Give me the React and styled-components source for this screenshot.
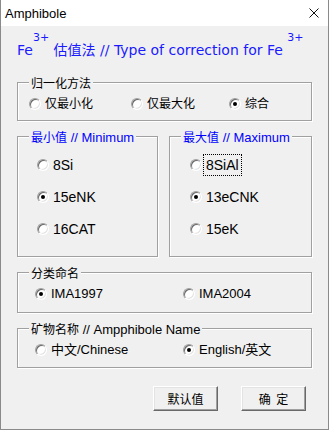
import React from 'react';
import styled, { createGlobalStyle } from 'styled-components';

const Global = createGlobalStyle`
  html, body { margin: 0; padding: 0; background: #ffffff; }
  body { font-family: "Liberation Sans", "Noto Sans CJK SC", sans-serif; }
`;

const Window = styled.div`
  width: 329px;
  height: 430px;
  box-sizing: border-box;
  border: 1px solid #8a8a8a;
  border-top: none;
  background: #f0f0f0;
  display: flex;
  flex-direction: column;
`;

const TitleBar = styled.div`
  flex: none;
  height: 26px;
  background: #ffffff;
  display: flex;
  align-items: center;
  justify-content: space-between;
  padding: 0 9px 0 4px;
  font: 13px/15px "Liberation Sans", sans-serif;
  color: #000;
`;

const Body = styled.div`
  flex: 1;
  display: flex;
  flex-direction: column;
  padding: 12px 16px 0 16px;
`;

const Heading = styled.div`
  height: 24px;
  margin-bottom: 20px;
  font: 14px/18px "DejaVu Sans", "Noto Sans CJK SC", sans-serif;
  color: #1a1aff;
  white-space: nowrap;
`;

const Han = styled.span`
  font-family: "Noto Sans CJK SC", sans-serif;
  font-size: ${p => p.$size || 14}px;
`;

const Sup = styled.span`
  font-size: 11px;
  line-height: 0;
  vertical-align: 14px;
`;

const Stack = styled.div`
  display: flex;
  flex-direction: column;
  gap: 15px;
`;

const Pair = styled.div`
  display: grid;
  grid-template-columns: 141px 143px;
  column-gap: 11px;
`;

const Group = styled.div`
  position: relative;
  box-sizing: border-box;
  height: ${p => p.$h}px;
  border: 1px solid #a0a0a0;
  box-shadow: inset 1px 1px 0 #ffffff, 1px 1px 0 #ffffff;
  padding: ${p => p.$pad};
`;

const Legend = styled.span`
  position: absolute;
  left: 11px;
  top: -8px;
  padding: 0 2px;
  background: #f0f0f0;
  font: 13px/16px "Liberation Sans", "Noto Sans CJK SC", sans-serif;
  color: ${p => (p.$blue ? '#0000ff' : '#000000')};
  white-space: nowrap;
`;

const Row = styled.div`
  display: grid;
  grid-template-columns: ${p => p.$cols};
  align-items: center;
`;

const Column = styled.div`
  display: flex;
  flex-direction: column;
  gap: 10px;
`;

const Option = styled.div`
  display: flex;
  align-items: center;
  gap: ${p => p.$gap}px;
  height: ${p => p.$h}px;
  font-size: ${p => p.$size}px;
  line-height: ${p => p.$h}px;
  color: #000;
  white-space: nowrap;
`;

const RadioMark = styled.span`
  flex: none;
  position: relative;
  width: 12px;
  height: 12px;
  box-sizing: border-box;
  border-radius: 50%;
  background: #ffffff;
  border: 1px solid;
  border-color: #a0a0a0 #ffffff #ffffff #a0a0a0;
  box-shadow: inset 1px 1px 0 #696969, inset -1px -1px 0 #e3e3e3;
  &::after {
    content: '';
    display: ${p => (p.$on ? 'block' : 'none')};
    position: absolute;
    left: 3px;
    top: 3px;
    width: 4px;
    height: 4px;
    border-radius: 50%;
    background: #000;
  }
`;

const FocusText = styled.span`
  box-sizing: border-box;
  height: 22px;
  line-height: 20px;
  padding: 0 2px;
  border: 1px dotted ${p => (p.$focus ? '#000' : 'transparent')};
`;

const Buttons = styled.div`
  display: flex;
  justify-content: flex-end;
  gap: 23px;
  margin-top: 18px;
  padding-right: 6px;
`;

const Button = styled.button`
  width: 65px;
  height: 25px;
  box-sizing: border-box;
  padding: 0;
  background: #f0f0f0;
  border: 1px solid;
  border-color: #ffffff #696969 #696969 #ffffff;
  box-shadow: inset -1px -1px 0 #a0a0a0, inset 1px 1px 0 #e3e3e3;
  font: 12px/16px "Noto Sans CJK SC", sans-serif;
  color: #000;
  word-spacing: 3px;
`;

function Radio({ on, children, size, h = 16, gap = 4 }) {
  return (
    <Option $size={size} $h={h} $gap={gap}>
      <RadioMark $on={on} />
      {children}
    </Option>
  );
}

function FocusRadio({ on, focus, children }) {
  return (
    <Option $size={14} $h={22} $gap={1}>
      <RadioMark $on={on} />
      <FocusText $focus={focus}>{children}</FocusText>
    </Option>
  );
}

export default function App() {
  return (
    <>
      <Global />
      <Window>
        <TitleBar>
          <span>Amphibole</span>
          <svg width="10" height="10" viewBox="0 0 10 10">
            <path d="M0.5 0.5 L9.5 9.5 M9.5 0.5 L0.5 9.5" stroke="#111" strokeWidth="1" />
          </svg>
        </TitleBar>
        <Body>
          <Heading>
            Fe<Sup>3+</Sup> <Han>估值法</Han> // Type of correction for Fe <Sup>3+</Sup>
          </Heading>
          <Stack>
            <Group $h={39} $pad="13px 0 0 11px">
              <Legend><Han $size={12}>归一化方法</Han></Legend>
              <Row $cols="102px 98px auto">
                <Radio size={12}>仅最小化</Radio>
                <Radio size={12}>仅最大化</Radio>
                <Radio size={12} on>综合</Radio>
              </Row>
            </Group>
            <Pair>
              <Group $h={121} $pad="17px 0 0 19px">
                <Legend $blue><Han $size={12}>最小值</Han> // Minimum</Legend>
                <Column>
                  <FocusRadio>8Si</FocusRadio>
                  <FocusRadio on>15eNK</FocusRadio>
                  <FocusRadio>16CAT</FocusRadio>
                </Column>
              </Group>
              <Group $h={121} $pad="17px 0 0 20px">
                <Legend $blue><Han $size={12}>最大值</Han> // Maximum</Legend>
                <Column>
                  <FocusRadio focus>8SiAl</FocusRadio>
                  <FocusRadio on>13eCNK</FocusRadio>
                  <FocusRadio>15eK</FocusRadio>
                </Column>
              </Group>
            </Pair>
            <Group $h={41} $pad="13px 0 0 17px">
              <Legend><Han $size={12}>分类命名</Han></Legend>
              <Row $cols="148px auto">
                <Radio size={13} on>IMA1997</Radio>
                <Radio size={13}>IMA2004</Radio>
              </Row>
            </Group>
            <Group $h={40} $pad="13px 0 0 17px">
              <Legend><Han $size={12}>矿物名称</Han> // Ampphibole Name</Legend>
              <Row $cols="148px auto">
                <Radio size={13}>中文/Chinese</Radio>
                <Radio size={13} on>English/英文</Radio>
              </Row>
            </Group>
          </Stack>
          <Buttons>
            <Button>默认值</Button>
            <Button>确 定</Button>
          </Buttons>
        </Body>
      </Window>
    </>
  );
}
